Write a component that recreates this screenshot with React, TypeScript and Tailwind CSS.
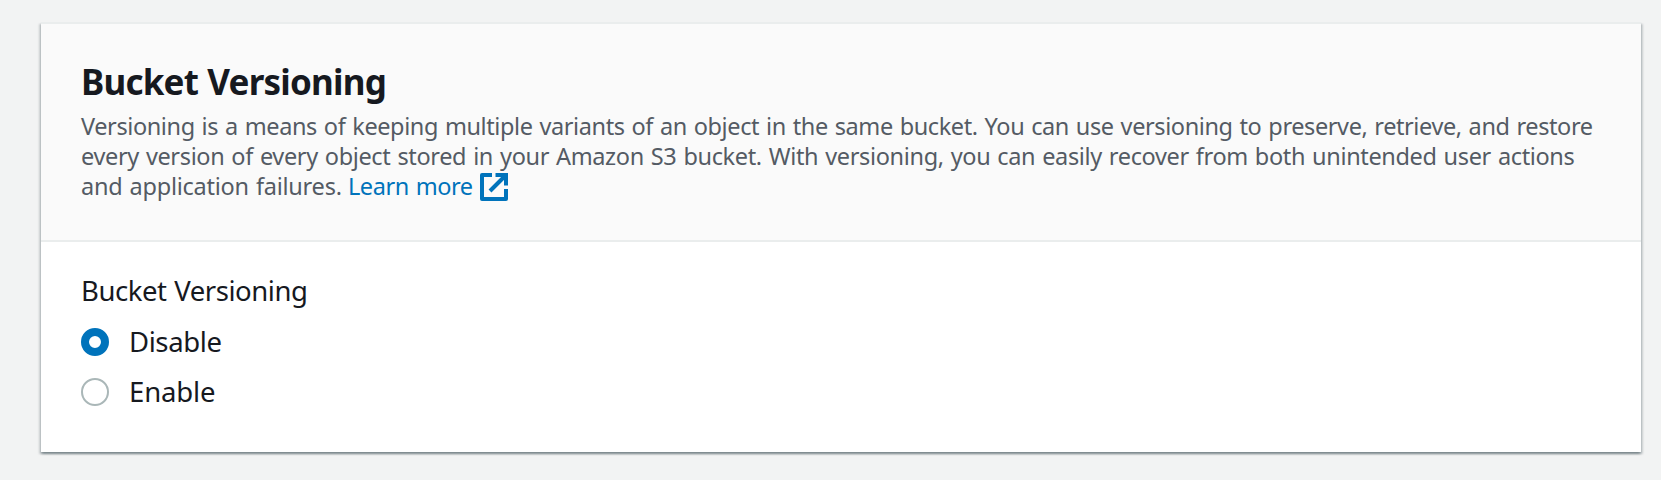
import { useState } from 'react';

function ExternalIcon() {
  return (
    <svg className="ml-[7px] mt-0.5 h-7 w-7 shrink-0" viewBox="0 0 28 28" fill="none" stroke="#0073bb" strokeWidth="4">
      <path d="M12 2H2v24h24V16" strokeLinejoin="round" />
      <path d="M15.5 2H26v10.5" strokeLinejoin="miter" />
      <path d="M25 3L10 18" />
    </svg>
  );
}

type RadioProps = {
  label: string;
  checked: boolean;
  tracking: string;
  onSelect: () => void;
};

function Radio({ label, checked, tracking, onSelect }: RadioProps) {
  return (
    <button type="button" role="radio" aria-checked={checked} onClick={onSelect} className="flex h-[50px] items-center gap-5">
      <svg className="h-7 w-7" viewBox="0 0 28 28">
        {checked ? (
          <circle cx="14" cy="14" r="10" fill="#fff" stroke="#0073bb" strokeWidth="8" />
        ) : (
          <circle cx="14" cy="14" r="13" fill="#fff" stroke="#aab7b8" strokeWidth="2" />
        )}
      </svg>
      <span className={tracking}>{label}</span>
    </button>
  );
}

export default function App() {
  const [enabled, setEnabled] = useState(false);
  return (
    <div className="h-[480px] overflow-hidden bg-[#f2f3f3] pl-[41px] pr-5 pt-[22px] font-['Noto_Sans',sans-serif] text-[#16191f]">
      <section className="h-[430px] border-t-2 border-[#eaeded] bg-white shadow-[0_2px_2px_0_rgba(0,28,36,0.3),2px_2px_2px_0_rgba(0,28,36,0.15),-2px_2px_2px_0_rgba(0,28,36,0.15)]">
        <header className="h-[218px] border-b-2 border-[#eaeded] bg-[#fafafa] px-10 pt-9">
          <h2 className="h-[49px] whitespace-nowrap text-[35px] font-bold leading-[44px] tracking-[-0.8px] [word-spacing:1px]">Bucket Versioning</h2>
          <div className="whitespace-nowrap pt-0.5 text-[23.5px] leading-[30px] text-[#545b64] [word-spacing:1.2px]">
            <p className="tracking-[-0.4px]">
              Versioning is a means of keeping multiple variants of an object in the same bucket. You can use versioning to preserve, retrieve, and restore
            </p>
            <p className="tracking-[-0.35px]">
              every version of every object stored in your Amazon S3 bucket. With versioning, you can easily recover from both unintended user actions
            </p>
            <div className="flex h-[30px]">
              <p className="w-[267px] tracking-[-0.24px]">and application failures.</p>
              <a className="flex tracking-[-0.44px] text-[#0073bb]">
                Learn more
                <ExternalIcon />
              </a>
            </div>
          </div>
        </header>
        <div className="whitespace-nowrap px-10 pt-[29px] text-[27.5px] leading-10">
          <p className="h-[46px] tracking-[-0.45px] [word-spacing:1px]">Bucket Versioning</p>
          <div role="radiogroup" aria-label="Bucket Versioning">
            <Radio label="Disable" tracking="tracking-[-0.4px] -mt-px" checked={!enabled} onSelect={() => setEnabled(false)} />
            <Radio label="Enable" tracking="tracking-[-0.15px] -mt-px" checked={enabled} onSelect={() => setEnabled(true)} />
          </div>
        </div>
      </section>
    </div>
  );
}
